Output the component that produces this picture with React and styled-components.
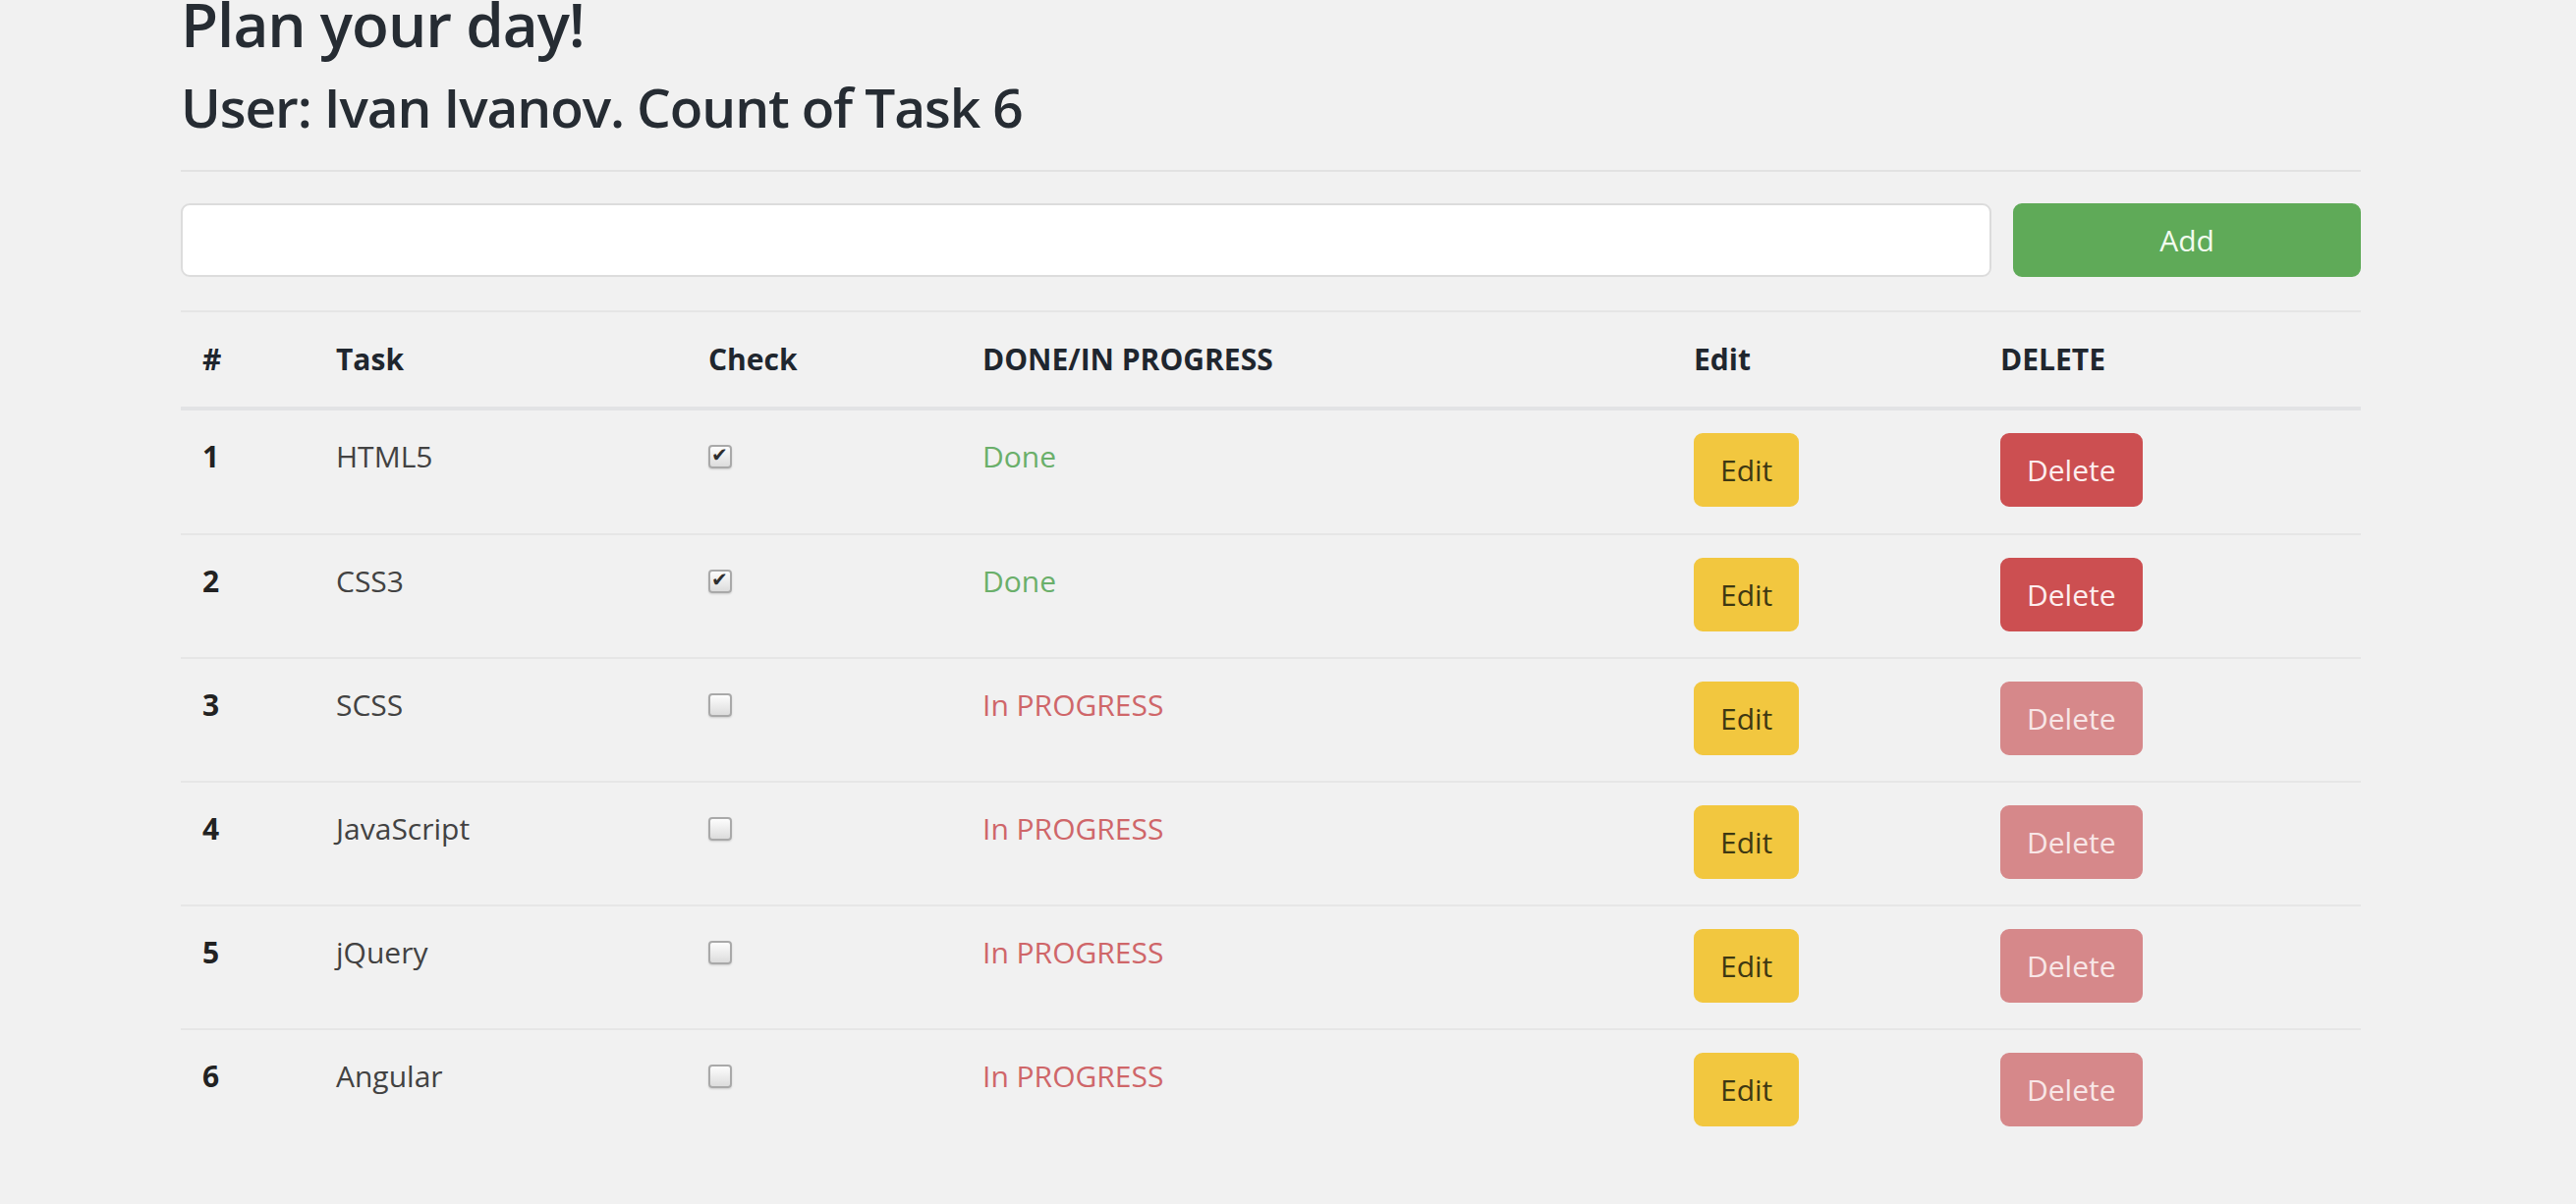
import React from "react";
import styled, { createGlobalStyle } from "styled-components";

const GlobalStyle = createGlobalStyle`
  html, body {
    margin: 0;
    padding: 0;
    background: #f1f1f1;
  }
  body {
    font-family: "Open Sans", "Noto Sans", "Liberation Sans", sans-serif;
    color: #333;
    overflow: hidden;
  }
`;

const Page = styled.div`
  width: 2219px;
  margin-left: 184px;
  display: flex;
  flex-direction: column;
`;

const Title = styled.h1`
  margin: -10px 0 0;
  font-size: 62px;
  line-height: 68px;
  font-weight: 600;
  letter-spacing: -1px;
  color: #262c33;
`;

const SubTitle = styled.h2`
  margin: 20px 0 0;
  font-size: 55px;
  line-height: 62px;
  font-weight: 600;
  color: #262c33;
  letter-spacing: -1.1px;
`;

const Rule = styled.hr`
  margin: 33px 0 0;
  border: 0;
  height: 2px;
  background: #e2e2e2;
`;

const Form = styled.form`
  margin-top: 32px;
  display: grid;
  grid-template-columns: 1fr 354px;
  gap: 22px;
`;

const TextInput = styled.input`
  height: 75px;
  box-sizing: border-box;
  border: 2px solid #dcdcdc;
  border-radius: 9px;
  background: #fff;
  font: inherit;
  font-size: 30px;
  padding: 0 24px;
  outline: none;
`;

const Button = styled.button`
  height: 75px;
  box-sizing: border-box;
  border: 2px solid transparent;
  border-radius: 9px;
  font-family: inherit;
  font-size: 30px;
  line-height: 1;
  padding: 0 25px;
  cursor: pointer;
  background: ${(p) => p.$bg};
  color: ${(p) => p.$fg};
  border-color: ${(p) => p.$bd || p.$bg};
`;

const Table = styled.div`
  margin-top: 34px;
  display: flex;
  flex-direction: column;
`;

const COLS = "136px 379px 279px 724px 312px 1fr";

const HeadRow = styled.div`
  display: grid;
  grid-template-columns: ${COLS};
  align-items: center;
  padding-left: 22px;
  height: 102px;
  box-sizing: border-box;
  border-top: 2px solid #e5e5e5;
  border-bottom: 4px solid #e2e3e5;
`;

const HeadCell = styled.div`
  font-size: 30px;
  line-height: 44px;
  font-weight: 700;
  color: #1f262e;
`;

const Row = styled.div`
  display: grid;
  grid-template-columns: ${COLS};
  align-items: start;
  padding: 23px 0 0 22px;
  height: ${(p) => (p.$first ? "125px" : "126px")};
  box-sizing: border-box;
  border-top: ${(p) => (p.$first ? "0" : "2px solid #e6e6e6")};
`;

const NumCell = styled.div`
  font-size: 30px;
  line-height: 48px;
  font-weight: 700;
  color: #222;
`;

const TextCell = styled.div`
  font-size: 30px;
  line-height: 48px;
  color: ${(p) => p.$color || "#424242"};
`;

const CheckCell = styled.div`
  height: 48px;
  display: flex;
  align-items: center;
`;

const Check = styled.input.attrs({ type: "checkbox" })`
  appearance: none;
  -webkit-appearance: none;
  margin: 0;
  width: 24px;
  height: 24px;
  box-sizing: border-box;
  border: 2px solid #a9a9a9;
  border-radius: 4px;
  background: linear-gradient(#fdfdfd, #dcdcdc);
  box-shadow: 0 1px 2px rgba(0, 0, 0, 0.15);
  position: relative;
  &:checked::after {
    content: "✔";
    position: absolute;
    left: 1px;
    top: -4px;
    font-family: "DejaVu Sans", sans-serif;
    font-size: 20px;
    font-weight: 700;
    color: #2e2e2e;
  }
`;

const tasks = [
  { id: 1, name: "HTML5", done: true },
  { id: 2, name: "CSS3", done: true },
  { id: 3, name: "SCSS", done: false },
  { id: 4, name: "JavaScript", done: false },
  { id: 5, name: "jQuery", done: false },
  { id: 6, name: "Angular", done: false },
];

export default function App() {
  return (
    <>
      <GlobalStyle />
      <Page>
        <Title>Plan your day!</Title>
        <SubTitle>User: Ivan Ivanov. Count of Task {tasks.length}</SubTitle>
        <Rule />
        <Form onSubmit={(e) => e.preventDefault()}>
          <TextInput type="text" />
          <Button type="submit" $bg="#5faa58" $fg="#f2fbee">
            Add
          </Button>
        </Form>
        <Table>
          <HeadRow>
            <HeadCell>#</HeadCell>
            <HeadCell>Task</HeadCell>
            <HeadCell>Check</HeadCell>
            <HeadCell>DONE/IN PROGRESS</HeadCell>
            <HeadCell>Edit</HeadCell>
            <HeadCell>DELETE</HeadCell>
          </HeadRow>
          {tasks.map((t, i) => (
            <Row key={t.id} $first={i === 0}>
              <NumCell>{t.id}</NumCell>
              <TextCell>{t.name}</TextCell>
              <CheckCell>
                <Check defaultChecked={t.done} />
              </CheckCell>
              <TextCell $color={t.done ? "#6aaf6a" : "#cf6669"}>
                {t.done ? "Done" : "In PROGRESS"}
              </TextCell>
              <div>
                <Button $bg="#f2c73f" $fg="#3e3812">
                  Edit
                </Button>
              </div>
              <div>
                <Button
                  $bg={t.done ? "#cc4f51" : "#d6888a"}
                  $fg={t.done ? "#fdeeee" : "#f8e6e6"}
                  disabled={!t.done}
                >
                  Delete
                </Button>
              </div>
            </Row>
          ))}
        </Table>
      </Page>
    </>
  );
}
